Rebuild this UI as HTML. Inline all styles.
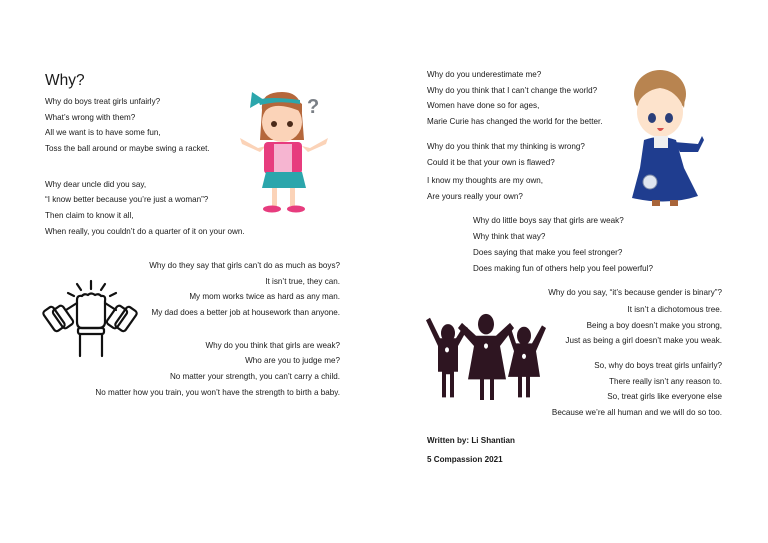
<!DOCTYPE html>
<html><head><meta charset="utf-8"><style>
body{margin:0;width:768px;height:543px;background:#fff;position:relative;overflow:hidden;font-family:"Liberation Sans",sans-serif;color:#1a1a1a}
.t{position:absolute;font-size:8.1px;line-height:10px;white-space:nowrap}
.r{text-align:right}
b{font-weight:bold}
</style></head><body>
<div class="t" style="left:45px;top:72px;font-size:15.5px;line-height:18px">Why?</div>
<div class="t" style="left:45px;top:97px">Why do boys treat girls unfairly?</div>
<div class="t" style="left:45px;top:113px">What’s wrong with them?</div>
<div class="t" style="left:45px;top:128px">All we want is to have some fun,</div>
<div class="t" style="left:45px;top:144px">Toss the ball around or maybe swing a racket.</div>
<div class="t" style="left:45px;top:180px">Why dear uncle did you say,</div>
<div class="t" style="left:45px;top:195px">“I know better because you’re just a woman”?</div>
<div class="t" style="left:45px;top:211px">Then claim to know it all,</div>
<div class="t" style="left:45px;top:227px">When really, you couldn’t do a quarter of it on your own.</div>

<div class="t r" style="right:428px;top:261px">Why do they say that girls can’t do as much as boys?</div>
<div class="t r" style="right:428px;top:277px">It isn’t true, they can.</div>
<div class="t r" style="right:428px;top:292px">My mom works twice as hard as any man.</div>
<div class="t r" style="right:428px;top:308px">My dad does a better job at housework than anyone.</div>
<div class="t r" style="right:428px;top:341px">Why do you think that girls are weak?</div>
<div class="t r" style="right:428px;top:356px">Who are you to judge me?</div>
<div class="t r" style="right:428px;top:372px">No matter your strength, you can’t carry a child.</div>
<div class="t r" style="right:428px;top:388px">No matter how you train, you won’t have the strength to birth a baby.</div>

<div class="t" style="left:427px;top:70px">Why do you underestimate me?</div>
<div class="t" style="left:427px;top:86px">Why do you think that I can’t change the world?</div>
<div class="t" style="left:427px;top:101px">Women have done so for ages,</div>
<div class="t" style="left:427px;top:117px">Marie Curie has changed the world for the better.</div>
<div class="t" style="left:427px;top:142px">Why do you think that my thinking is wrong?</div>
<div class="t" style="left:427px;top:158px">Could it be that your own is flawed?</div>
<div class="t" style="left:427px;top:176px">I know my thoughts are my own,</div>
<div class="t" style="left:427px;top:192px">Are yours really your own?</div>
<div class="t" style="left:473px;top:216px">Why do little boys say that girls are weak?</div>
<div class="t" style="left:473px;top:232px">Why think that way?</div>
<div class="t" style="left:473px;top:248px">Does saying that make you feel stronger?</div>
<div class="t" style="left:473px;top:264px">Does making fun of others help you feel powerful?</div>

<div class="t r" style="right:46px;top:288px">Why do you say, “it’s because gender is binary”?</div>
<div class="t r" style="right:46px;top:305px">It isn’t a dichotomous tree.</div>
<div class="t r" style="right:46px;top:321px">Being a boy doesn’t make you strong,</div>
<div class="t r" style="right:46px;top:336px">Just as being a girl doesn’t make you weak.</div>
<div class="t r" style="right:46px;top:361px">So, why do boys treat girls unfairly?</div>
<div class="t r" style="right:46px;top:377px">There really isn’t any reason to.</div>
<div class="t r" style="right:46px;top:392px">So, treat girls like everyone else</div>
<div class="t r" style="right:46px;top:408px">Because we’re all human and we will do so too.</div>
<div class="t" style="left:427px;top:436px"><b>Written by: Li Shantian</b></div>
<div class="t" style="left:427px;top:455px"><b>5 Compassion 2021</b></div>

<!-- girl -->
<svg style="position:absolute;left:230px;top:80px" width="110" height="140" viewBox="0 0 110 140">
<text x="77" y="33" font-size="20" font-weight="bold" fill="#7a7f86" font-family="Liberation Sans">?</text>
<path d="M32 30 Q30 12 52 12 Q72 12 72 34 L74 60 L30 60 Z" fill="#b5673b"/>
<ellipse cx="52" cy="42" rx="20" ry="20" fill="#fbd3b8"/>
<path d="M32 36 Q40 18 72 32 L72 24 Q55 10 32 28Z" fill="#b5673b"/>
<path d="M28 20 Q38 16 70 20 L70 24 Q50 20 30 25Z" fill="#2ba6ac"/>
<path d="M22 12 L34 20 L20 28 Z" fill="#2ba6ac"/>
<circle cx="44" cy="44" r="3" fill="#4a2a1a"/><circle cx="60" cy="44" r="3" fill="#4a2a1a"/>
<path d="M10 58 L28 68 L36 66 L30 72 L12 64Z" fill="#fbd3b8"/>
<path d="M98 58 L80 68 L72 66 L78 72 L96 64Z" fill="#fbd3b8"/>
<rect x="34" y="62" width="38" height="32" rx="4" fill="#e73c7e"/>
<rect x="44" y="64" width="18" height="30" fill="#f6b5d1"/>
<path d="M36 92 L72 92 L76 108 L32 108Z" fill="#2ba6ac"/>
<rect x="42" y="108" width="5" height="18" fill="#fbd3b8"/><rect x="60" y="108" width="5" height="18" fill="#fbd3b8"/>
<ellipse cx="42" cy="129" rx="9" ry="3.5" fill="#e73c7e"/><ellipse cx="66" cy="129" rx="9" ry="3.5" fill="#e73c7e"/>
</svg>

<!-- marie curie -->
<svg style="position:absolute;left:628px;top:64px" width="80" height="145" viewBox="0 0 80 145">
<ellipse cx="32" cy="30" rx="26" ry="24" fill="#b88450"/>
<ellipse cx="32" cy="48" rx="23" ry="25" fill="#fde3cc"/>
<path d="M8 42 Q10 10 34 12 Q60 14 56 44 Q48 26 32 24 Q16 26 8 42Z" fill="#b88450"/>
<ellipse cx="24" cy="54" rx="4" ry="5" fill="#2a3f7a"/><ellipse cx="41" cy="54" rx="4" ry="5" fill="#2a3f7a"/>
<path d="M29 64 Q32 70 36 64Z" fill="#d8504c"/>
<path d="M16 76 Q32 70 48 76 L56 104 L70 132 Q40 142 4 134 L12 104Z" fill="#1f3d8f"/>
<path d="M46 78 L70 80 L74 72 L76 76 L70 88 L52 88Z" fill="#1f3d8f"/>
<rect x="26" y="72" width="14" height="12" fill="#f0f0f0"/>
<circle cx="22" cy="118" r="7" fill="#dfe6f0" stroke="#7c8aa8"/>
<rect x="24" y="136" width="8" height="6" fill="#a8653a"/><rect x="42" y="136" width="8" height="6" fill="#a8653a"/>
</svg>

<!-- dumbbell fist -->
<svg style="position:absolute;left:40px;top:270px" width="100" height="90" viewBox="0 0 100 90" fill="none" stroke="#111" stroke-width="2.2" stroke-linejoin="round" stroke-linecap="round">
<path d="M51 11 V19 M37 14 L41 20 M65 14 L61 20 M28 23 L34 26 M76 23 L70 26"/>
<path d="M37 30 Q37 25 42 26 Q44 23 48 25 Q51 22 55 25 Q59 23 61 26 Q66 25 65 31 L65 52 Q65 58 58 58 L42 58 Q37 58 37 52 Z"/>
<path d="M37 33 L26 40 M65 33 L76 40"/>
<rect x="8" y="37" width="12" height="24" rx="3" transform="rotate(-35 14 49)"/>
<rect x="17" y="36" width="12" height="22" rx="3" transform="rotate(-35 23 47)"/>
<rect x="80" y="37" width="12" height="24" rx="3" transform="rotate(35 86 49)"/>
<rect x="71" y="36" width="12" height="22" rx="3" transform="rotate(35 77 47)"/>
<rect x="38" y="58" width="26" height="6" rx="2"/>
<path d="M40 64 V86 M62 64 V86"/>
</svg>

<!-- family -->
<svg style="position:absolute;left:420px;top:310px" width="140" height="90" viewBox="0 0 140 70" preserveAspectRatio="none" fill="#2e1521">
<circle cx="28" cy="18" r="7"/>
<path d="M6 8 L10 6 L20 22 L36 22 L44 12 L48 14 L38 28 L38 48 L34 48 L34 68 L30 68 L30 50 L26 50 L26 68 L22 68 L22 48 L18 48 L18 28Z"/>
<circle cx="66" cy="11" r="8"/>
<path d="M38 14 L42 10 L56 20 L76 20 L90 10 L94 14 L80 28 L86 54 L74 54 L74 70 L70 70 L70 54 L64 54 L64 70 L60 70 L60 54 L48 54 L54 28Z"/>
<circle cx="104" cy="20" r="7"/>
<path d="M86 14 L90 12 L96 26 L112 26 L122 12 L126 14 L116 32 L120 52 L110 52 L110 68 L106 68 L106 52 L102 52 L102 68 L98 68 L98 52 L88 52 L94 32Z"/>
<g fill="#fff"><circle cx="27" cy="31" r="2"/><circle cx="66" cy="28" r="2"/><circle cx="104" cy="36" r="2"/></g>
</svg>
</body></html>
